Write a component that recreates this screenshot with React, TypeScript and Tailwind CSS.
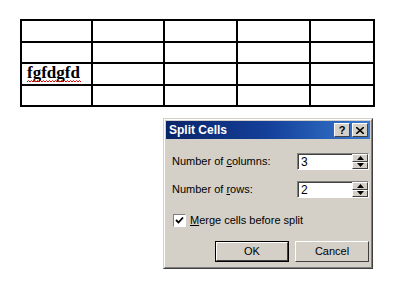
import React from "react"

const colWidths = ["w-[69px]", "w-[70px]", "w-[71px]", "w-[71px]", "w-[62px]"]
const rowHeights = ["h-[20px]", "h-[19px]", "h-[20px]", "h-[19px]"]

function Spinner() {
  return (
    <div className="flex flex-col w-[16px] h-full">
      {["up", "down"].map((dir) => (
        <div
          key={dir}
          className="flex-1 bg-[#d4d0c8] border-t border-l border-t-white border-l-white border-r border-b border-r-[#404040] border-b-[#404040] flex items-center justify-center"
        >
          <svg width="7" height="4" viewBox="0 0 7 4">
            {dir === "up" ? <path d="M3.5 0 L7 4 L0 4 Z" fill="#000" /> : <path d="M0 0 L7 0 L3.5 4 Z" fill="#000" />}
          </svg>
        </div>
      ))}
    </div>
  )
}

function NumberField({ value }: { value: string }) {
  return (
    <div className="flex w-[72px] h-[17px] bg-white border-t border-l border-t-[#808080] border-l-[#808080] border-r border-b border-r-white border-b-white">
      <div className="flex-1 border-t border-l border-t-[#404040] border-l-[#404040] flex items-center pl-[2px] text-[12px] text-black">
        {value}
      </div>
      <Spinner />
    </div>
  )
}

function Win98Button({ label, isDefault }: { label: string; isDefault?: boolean }) {
  return (
    <div className={`w-[74px] h-[21px] ${isDefault ? "border border-black" : ""}`}>
      <div className="w-full h-full bg-[#d4d0c8] border-t border-l border-t-white border-l-white border-r border-b border-r-[#404040] border-b-[#404040] flex items-center justify-center text-[11px] text-black">
        {label}
      </div>
    </div>
  )
}

export default function App() {
  return (
    <div className="w-[406px] h-[293px] bg-white overflow-hidden pt-[19px] pl-[20px] font-['Liberation_Sans',Arial,sans-serif]">
      {/* table in the document */}
      <div className="inline-flex flex-col gap-[2px] bg-black p-[2px]">
        {rowHeights.map((h, r) => (
          <div key={r} className="flex gap-[2px]">
            {colWidths.map((w, c) => (
              <div key={c} className={`${w} ${h} bg-white relative`}>
                {r === 2 && c === 0 && (
                  <>
                    <span className="absolute left-[5px] top-[-3px] text-[17px] font-bold font-['Liberation_Serif',serif] text-black leading-[24px]">
                      fgfdgfd
                    </span>
                    {/* spell-check squiggle */}
                    <svg className="absolute left-[5px] top-[16px]" width="54" height="3" viewBox="0 0 54 3">
                      <path
                        d="M0 2 L1.5 0.5 L3 2 L4.5 0.5 L6 2 L7.5 0.5 L9 2 L10.5 0.5 L12 2 L13.5 0.5 L15 2 L16.5 0.5 L18 2 L19.5 0.5 L21 2 L22.5 0.5 L24 2 L25.5 0.5 L27 2 L28.5 0.5 L30 2 L31.5 0.5 L33 2 L34.5 0.5 L36 2 L37.5 0.5 L39 2 L40.5 0.5 L42 2 L43.5 0.5 L45 2 L46.5 0.5 L48 2 L49.5 0.5 L51 2 L52.5 0.5 L54 2"
                        stroke="#e00000"
                        strokeWidth="1"
                        fill="none"
                      />
                    </svg>
                  </>
                )}
              </div>
            ))}
          </div>
        ))}
      </div>

      {/* Split Cells dialog */}
      <div className="ml-[143px] mt-[11px] w-[210px] h-[151px] bg-[#d4d0c8] border border-t-[#d4d0c8] border-l-[#d4d0c8] border-r-[#404040] border-b-[#404040]">
        <div className="h-full border border-t-white border-l-white border-r-[#808080] border-b-[#808080] p-[1px] flex flex-col">
          <div className="h-[18px] flex items-center justify-between pl-[3px] pr-[2px] bg-gradient-to-r from-[#0a246a] via-[#14409a] to-[#3a7ad0]">
            <span className="text-white font-bold text-[12px] leading-none">Split Cells</span>
            <div className="flex gap-[2px]">
              <div className="w-[16px] h-[14px] bg-[#d4d0c8] border-t border-l border-t-white border-l-white border-r border-b border-r-[#404040] border-b-[#404040] flex items-center justify-center text-[11px] font-bold leading-none text-black">
                ?
              </div>
              <div className="w-[16px] h-[14px] bg-[#d4d0c8] border-t border-l border-t-white border-l-white border-r border-b border-r-[#404040] border-b-[#404040] flex items-center justify-center">
                <svg width="8" height="7" viewBox="0 0 8 7">
                  <path d="M0 0 L8 7 M8 0 L0 7" stroke="#000" strokeWidth="1.6" />
                </svg>
              </div>
            </div>
          </div>

          <div className="flex flex-col pl-[6px] pr-[1px] pt-[14px] text-[11px] text-black">
            <div className="flex items-center justify-between h-[17px]">
              <span>
                Number of <span className="underline">c</span>olumns:
              </span>
              <NumberField value="3" />
            </div>
            <div className="flex items-center justify-between h-[17px] mt-[11px]">
              <span>
                Number of <span className="underline">r</span>ows:
              </span>
              <NumberField value="2" />
            </div>
            <div className="flex items-center gap-[4px] mt-[16px] pl-[1px] h-[13px]">
              <div className="w-[13px] h-[13px] bg-white border-t border-l border-t-[#808080] border-l-[#808080] border-r border-b border-r-white border-b-white flex items-center justify-center">
                <svg width="9" height="9" viewBox="0 0 9 9">
                  <path d="M1 4 L3.5 6.5 L8 1.5" stroke="#000" strokeWidth="1.8" fill="none" />
                </svg>
              </div>
              <span>
                <span className="underline">M</span>erge cells before split
              </span>
            </div>
            <div className="flex justify-end gap-[6px] mt-[14px]">
              <Win98Button label="OK" isDefault />
              <Win98Button label="Cancel" />
            </div>
          </div>
        </div>
      </div>
    </div>
  )
}
